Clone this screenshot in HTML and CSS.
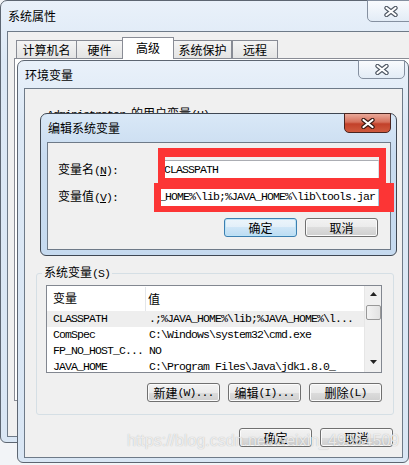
FILE: index.html
```html
<!DOCTYPE html>
<html>
<head>
<meta charset="utf-8">
<link rel="stylesheet" href="styles.css">
</head>
<body>
<section class="win win1">
  <header class="tbar">
    <span class="ttl">系统属性</span>
    <span class="xbtn"><svg width="14" height="11" viewBox="0 0 14 11"><path d="M2.5 2L11.5 9M11.5 2L2.5 9" stroke="#4f5864" stroke-width="4.4" stroke-linecap="round"/><path d="M2.5 2L11.5 9M11.5 2L2.5 9" stroke="#fff" stroke-width="2.2" stroke-linecap="round"/></svg></span>
  </header>
  <div class="client">
    <div class="tabs">
      <span class="tab t1">计算机名</span>
      <span class="tab t2">硬件</span>
      <span class="tab t3 sel">高级</span>
      <span class="tab t4">系统保护</span>
      <span class="tab t5">远程</span>
    </div>
    <div class="tabpage"></div>
  </div>
</section>

<section class="win win2">
  <header class="tbar">
    <span class="ttl">环境变量</span>
    <span class="xbtn"><svg width="14" height="11" viewBox="0 0 14 11"><path d="M2.5 2L11.5 9M11.5 2L2.5 9" stroke="#4f5864" stroke-width="4.4" stroke-linecap="round"/><path d="M2.5 2L11.5 9M11.5 2L2.5 9" stroke="#fff" stroke-width="2.2" stroke-linecap="round"/></svg></span>
  </header>
  <div class="client">
    <div class="uv"><span class="m">Administrator </span>的用户变量<span class="m">(U)</span></div>
    <fieldset class="grp">
      <legend>系统变量<span class="m">(S)</span></legend>
      <div class="list">
        <div class="lmain">
          <div class="lhead"><span class="h1">变量</span><span class="h2">值</span></div>
          <div class="lrow selrow m"><span class="c1">CLASSPATH</span><span class="c2">.;%JAVA_HOME%\lib;%JAVA_HOME%\l...</span></div>
          <div class="lrow m"><span class="c1">ComSpec</span><span class="c2">C:\Windows\system32\cmd.exe</span></div>
          <div class="lrow m"><span class="c1">FP_NO_HOST_C...</span><span class="c2">NO</span></div>
          <div class="lrow m"><span class="c1">JAVA_HOME</span><span class="c2">C:\Program Files\Java\jdk1.8.0_</span></div>
        </div>
        <div class="sbar">
          <svg class="arr" width="7" height="4" viewBox="0 0 7 4"><path d="M0 4L3.5 0L7 4Z" fill="#222"/></svg>
          <div class="thumb"></div>
          <svg class="arr dn" width="7" height="4" viewBox="0 0 7 4"><path d="M0 0L3.5 4L7 0Z" fill="#222"/></svg>
        </div>
      </div>
      <div class="btnrow">
        <span class="btn">新建<span class="m">(W)...</span></span>
        <span class="btn">编辑<span class="m">(I)...</span></span>
        <span class="btn">删除<span class="m">(L)</span></span>
      </div>
    </fieldset>
    <div class="btnrow foot">
      <span class="btn">确定</span>
      <span class="btn">取消</span>
    </div>
  </div>
</section>

<section class="win win3">
  <header class="tbar">
    <span class="ttl">编辑系统变量</span>
    <span class="xbtn red"><svg width="14" height="11" viewBox="0 0 14 11"><path d="M2.5 2L11.5 9M11.5 2L2.5 9" stroke="#3a1a14" stroke-width="4.4" stroke-linecap="round"/><path d="M2.5 2L11.5 9M11.5 2L2.5 9" stroke="#fff" stroke-width="2.2" stroke-linecap="round"/></svg></span>
  </header>
  <div class="client">
    <div class="frow r1">
      <label class="lbl">变量名<span class="m">(<u>N</u>):</span></label>
      <div class="inp m"><span>CLASSPATH</span></div>
    </div>
    <div class="frow r2">
      <label class="lbl">变量值<span class="m">(<u>V</u>):</span></label>
      <div class="inp focus m"><span>.;%JAVA_HOME%\lib;%JAVA_HOME%\lib\tools.jar</span></div>
    </div>
    <div class="btnrow dlg">
      <span class="btn def">确定</span>
      <span class="btn">取消</span>
    </div>
  </div>
</section>

<div class="mark mark1"></div>
<div class="mark mark2"></div>
<div class="wm">https://blog.csdn.net/weixin_49954509</div>
</body>
</html>
```
FILE: styles.css
```css
* { box-sizing: border-box; margin: 0; padding: 0; }
html, body { width: 409px; height: 465px; overflow: hidden; }
body {
  position: relative;
  background: #f2f4f7;
  font: 12px/14px "Noto Sans CJK SC", "Liberation Sans", sans-serif;
  color: #000;
}
.m { font-family: "Liberation Mono", monospace; font-size: 11.5px; letter-spacing: -0.9px; }
u { text-decoration: underline; text-underline-offset: 1px; }

.win {
  position: absolute;
  display: flex;
  flex-direction: column;
  border: 1px solid #5d6672;
  border-radius: 7px 7px 6px 6px;
  background: linear-gradient(#e9f1fa, #dce8f5 60px, #d9e6f4);
}
.win1 { left: 0; top: 0; width: 420px; height: 443px; }
.win2 { left: 17px; top: 60px; width: 392px; height: 403px; }
.win3 {
  left: 40px; top: 113px; width: 357px; height: 143px;
  border-color: #3f4752;
  background: linear-gradient(#d9e8f7, #c9dcf0 40px, #c6daef);
}

.tbar { display: flex; align-items: flex-start; flex: none; }
.win1 .tbar { height: 30px; }
.win2 .tbar { height: 27px; }
.win3 .tbar { height: 28px; }
.ttl { align-self: center; padding-left: 7px; }

.xbtn {
  margin-left: auto;
  margin-top: -1px;
  width: 47px;
  display: flex;
  align-items: center;
  justify-content: center;
  border: 1px solid #8590a0;
  border-radius: 0 0 5px 5px;
  background: linear-gradient(rgba(255,255,255,.7), rgba(225,234,244,.6));
}
.win1 .xbtn { height: 22px; margin-right: 5px; }
.win2 .xbtn { height: 19px; margin-right: 3px; }
.win3 .xbtn { height: 20px; margin-right: 5px; }
.xbtn.red {
  border-color: #4a2520;
  background: linear-gradient(#e9a99a, #d6705b 45%, #c2412a 55%, #cf5a3e);
}

.client { flex: 1; background: #f0f0f0; border: 1px solid #6e7a88; }
.win1 .client { margin: 0 5px 5px 6px; }
.win2 .client { margin: 0 5px 4px 6px; }
.win3 .client { margin: 0 5px 5px 6px; }

/* window 1 tabs */
.tabs { display: flex; align-items: flex-end; height: 26px; padding: 5px 0 0 8px; }
.tab {
  height: 18px;
  border: 1px solid #898c95;
  border-bottom: none;
  background: linear-gradient(#f4f4f4, #e4e4e4);
  text-align: center;
  line-height: 17px;
}
.t1 { width: 61px; }
.t2 { width: 47px; margin-left: -1px; }
.t3 { width: 52px; margin-left: -1px; }
.t4 { width: 59px; margin-left: -1px; }
.t5 { width: 46px; }
.tab.sel {
  height: 22px;
  margin-bottom: -1px;
  background: #fff;
  position: relative;
  z-index: 1;
  line-height: 19px;
}
.tabpage { margin-left: 6px; height: 343px; border: 1px solid #898c95; background: #fff; }

/* window 2 */
.uv { padding: 17px 0 0 22px; height: 31px; color: #000; }
.grp {
  margin: 145px 8px 0 11px;
  border: 1px solid #d5dfe5;
  border-radius: 3px;
  padding: 0;
}
.grp legend { margin-left: 5px; padding: 0 2px; line-height: 14px; }
.list {
  display: flex;
  height: 88px;
  margin: 4px 11px 0 9px;
  border: 1px solid #828790;
  background: #fff;
  overflow: hidden;
}
.lmain { flex: 1; overflow: hidden; }
.lhead { display: flex; height: 25px; align-items: center; padding-top: 2px; border-bottom: 1px solid #fff; }
.h1 { width: 99px; padding-left: 6px; border-right: 1px solid #e3e6ea; height: 24px; line-height: 22px; }
.h2 { padding-left: 2px; line-height: 22px; }
.lrow { display: flex; height: 16px; line-height: 16px; white-space: nowrap; }
.selrow { background: #eeeeee; }
.c1 { width: 102px; padding-left: 6px; flex: none; }
.sbar {
  width: 17px;
  flex: none;
  background: #f0f0f0;
  border-left: 1px solid #e6e6e6;
  display: flex;
  flex-direction: column;
  align-items: center;
}
.arr { margin-top: 6px; flex: none; }
.thumb {
  margin-top: 9px;
  width: 15px;
  height: 15px;
  border: 1px solid #989898;
  border-radius: 2px;
  background: linear-gradient(90deg, #f3f3f3, #e2e2e2);
  flex: none;
}
.arr.dn { margin-top: auto; margin-bottom: 8px; }

.btnrow { display: flex; justify-content: flex-end; gap: 8px; }
.grp .btnrow { margin: 10px 11px 0 0; padding-bottom: 12px; }
.foot { margin: 13px 9px 0 0; }
.btn {
  width: 73px;
  height: 19px;
  display: flex;
  align-items: center;
  justify-content: center;
  border: 1px solid #707070;
  border-radius: 3px;
  background: linear-gradient(#f2f2f2, #ebebeb 50%, #dddddd 50%, #cfcfcf);
  box-shadow: inset 0 0 0 1px #fbfbfb;
  line-height: 14px;
}
.btn.def {
  border-color: #3c7fb1;
  box-shadow: inset 0 0 0 1px #bde3f6;
  background: linear-gradient(#ecf5fb, #e2eff9 50%, #cfe6f7 50%, #bbdcf3);
}

/* dialog 3 */
.frow { display: flex; align-items: center; height: 20px; }
.r1 { margin-top: 17px; }
.r2 { margin-top: 7px; }
.lbl { width: 112px; padding-left: 10px; flex: none; }
.inp {
  width: 219px;
  height: 20px;
  border: 1px solid #abadb3;
  border-bottom-color: #e3e9ef;
  border-right-color: #dbdfe6;
  background: #fff;
  display: flex;
  align-items: center;
  padding: 0 3px;
  overflow: hidden;
  white-space: nowrap;
}
.inp.focus { justify-content: flex-end; border-color: #3d7bad #a4c9e3 #b7d9ed #a4c9e3; }
.dlg { margin: 11px 12px 0 0; }

/* annotation overlays */
.mark { position: absolute; border-style: solid; border-color: #fc3535; }
.mark1 { left: 158px; top: 148px; width: 228px; height: 35px; border-width: 9px 7px 5px 7px; }
.mark2 { left: 154px; top: 183px; width: 240px; height: 29px; border-width: 6px 15px 6px 7px; }

.wm {
  position: absolute;
  left: 127px;
  top: 431px;
  font: 16px/20px "Liberation Sans", sans-serif;
  color: rgba(255,255,255,.75);
  text-shadow: 0 0 1px rgba(90,90,90,.45);
  white-space: nowrap;
}
```
